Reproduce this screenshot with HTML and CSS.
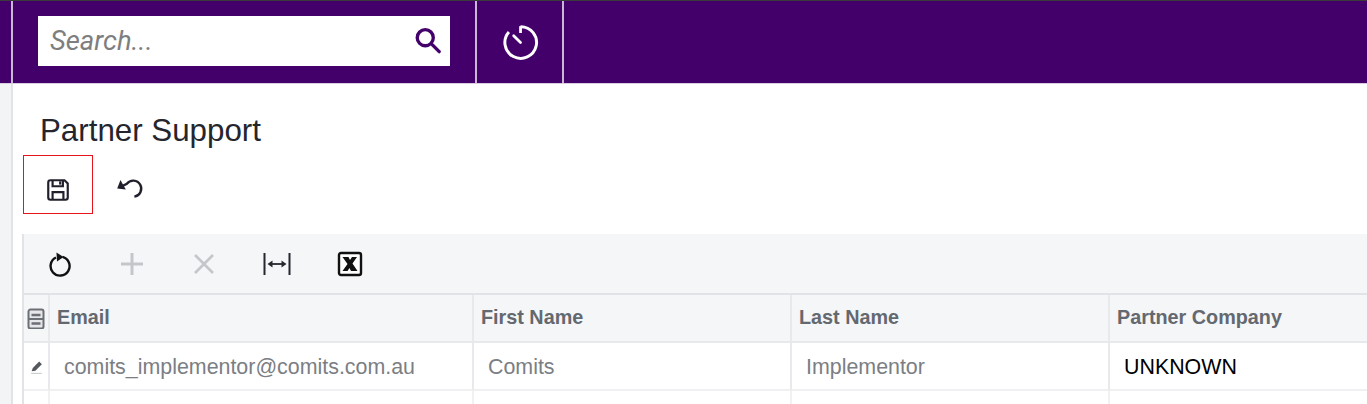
FILE: index.html
```html
<!DOCTYPE html>
<html lang="en">
<head>
<meta charset="utf-8">
<title>Partner Support</title>
<link rel="stylesheet" href="styles.css">
</head>
<body>
<header class="topbar">
  <div class="topbar-start"></div>
  <div class="search-cell">
    <div class="search-box">
      <span class="search-text">Search...</span>
      <svg class="search-icon" viewBox="0 0 26 26" width="29" height="29"><circle cx="11" cy="10.500" r="7.200" fill="none" stroke="#43006b" stroke-width="3"/><path d="M16.500 16l7 7" fill="none" stroke="#43006b" stroke-width="3" stroke-linecap="round"/></svg>
    </div>
  </div>
  <div class="timer-cell">
    <svg viewBox="0 0 36 36" width="38" height="38"><path d="M18.500 3.500A15 15 0 1 1 7.500 8.500" fill="none" stroke="#fff" stroke-width="2.800"/><path d="M18.500 3v6.500" fill="none" stroke="#fff" stroke-width="2.600"/><path d="M12 12l6.500 6.500" fill="none" stroke="#fff" stroke-width="2.600" stroke-linecap="round"/></svg>
  </div>
</header>
<div class="layout">
  <aside class="rail"></aside>
  <main class="content">
    <h1 class="title">Partner Support</h1>
    <div class="actions">
      <button class="action action-save" type="button">
        <svg viewBox="0 0 24 24" width="26" height="26"><path d="M3 5a2 2 0 0 1 2-2h13l3 3v13a2 2 0 0 1-2 2H5a2 2 0 0 1-2-2z" fill="none" stroke="#20202c" stroke-width="2"/><path d="M7 3.500v5h9.500v-5" fill="none" stroke="#20202c" stroke-width="2"/><path d="M7 20.500v-6.500h10v6.500" fill="none" stroke="#20202c" stroke-width="2"/><path d="M13 4h2v3h-2z" fill="#20202c"/></svg>
      </button>
      <button class="action action-undo" type="button">
        <svg viewBox="0 0 28 24" width="30" height="26"><path d="M5 11.500l7-3.500a7.500 7.500 0 1 1 7 12" fill="none" stroke="#20202c" stroke-width="2.200"/><path d="M3 12.500l3-8 5 9z" fill="#20202c"/></svg>
      </button>
    </div>
    <section class="grid">
      <div class="grid-tools">
        <svg class="tool" viewBox="0 0 26 26" width="26" height="26"><path d="M9 6.500a9.500 9.500 0 1 0 6.500-.6" fill="none" stroke="#111" stroke-width="2.400"/><path d="M9.500 1.500l7 4.500-6.500 4.500z" fill="#111"/></svg>
        <svg class="tool" viewBox="0 0 26 26" width="26" height="26"><path d="M13 2v22M2 13h22" fill="none" stroke="#c4c6c9" stroke-width="3"/></svg>
        <svg class="tool" viewBox="0 0 26 26" width="26" height="26"><path d="M4 4l18 18M22 4L4 22" fill="none" stroke="#c4c6c9" stroke-width="2.600"/></svg>
        <svg class="tool" viewBox="0 0 28 26" width="28" height="26"><path d="M1.500 2v22M26.500 2v22" fill="none" stroke="#26262e" stroke-width="2"/><path d="M6 13h16" fill="none" stroke="#26262e" stroke-width="1.800"/><path d="M4.500 13l5-3.500v7zM23.500 13l-5-3.500v7z" fill="#26262e"/></svg>
        <svg class="tool" viewBox="0 0 26 26" width="26" height="26"><rect x="2" y="2" width="22" height="22" rx="2" fill="#fff" stroke="#111" stroke-width="2.400"/><path d="M5.500 6h6l1.500 3 2-3h5l-4.500 6.500 5 7.500h-6.500l-1.500-3-2 3H5.500l5-7z" fill="#111"/></svg>
      </div>
      <div class="grid-table">
        <div class="cell head sel">
          <svg viewBox="0 0 18 22" width="18" height="22"><path d="M1.500 4.500a2 2 0 0 1 2-2h11a2 2 0 0 1 2 2v15a2 2 0 0 1-2 2h-11a2 2 0 0 1-2-2z" fill="#e6e7ea" stroke="#6b6f76" stroke-width="2"/><path d="M1.500 12h15" stroke="#6b6f76" stroke-width="2"/><path d="M4.500 8h9M4.500 16.500h9" stroke="#6b6f76" stroke-width="2.400"/></svg>
        </div>
        <div class="cell head">Email</div>
        <div class="cell head">First Name</div>
        <div class="cell head">Last Name</div>
        <div class="cell head">Partner Company</div>
        <div class="cell body sel">
          <svg viewBox="0 0 14 14" width="15" height="15"><path d="M2.500 10.500l1-3L9.500 1.500l2.500 2.500-6 6z" fill="#55585e"/><path d="M2 12.500h10" stroke="#c9cbce" stroke-width="1"/></svg>
        </div>
        <div class="cell body muted">comits_implementor@comits.com.au</div>
        <div class="cell body muted">Comits</div>
        <div class="cell body muted">Implementor</div>
        <div class="cell body strong">UNKNOWN</div>
        <div class="cell empty sel"></div>
        <div class="cell empty"></div>
        <div class="cell empty"></div>
        <div class="cell empty"></div>
        <div class="cell empty"></div>
      </div>
    </section>
  </main>
</div>
</body>
</html>
```

FILE: styles.css
```css
* { box-sizing: border-box; }

html, body {
  margin: 0;
  height: 404px;
  overflow: hidden;
  background: #fff;
  font-family: "Liberation Sans", Arial, sans-serif;
}

.topbar {
  display: flex;
  height: 84px;
  background: #43006b;
  border-top: 1px solid #3a3a3a;
  border-bottom: 1px solid #d9cde2;
}

.topbar-start {
  width: 13px;
  border-right: 2px solid #c8b8d4;
}

.search-cell {
  width: 464px;
  padding: 15px 0 0 25px;
  border-right: 2px solid #c8b8d4;
}

.search-box {
  display: flex;
  align-items: center;
  justify-content: space-between;
  width: 412px;
  height: 50px;
  padding: 0 8px 0 12px;
  background: #fff;
}

.search-text {
  font-size: 27.400px;
  font-style: italic;
  color: #7e7e7e;
  font-family: Roboto, "Liberation Sans", sans-serif;
}

.search-icon {
  margin-bottom: 2px;
}

.timer-cell {
  display: flex;
  align-items: center;
  justify-content: center;
  width: 87px;
  border-right: 2px solid #c8b8d4;
}

.layout {
  display: flex;
  height: 320px;
}

.rail {
  width: 13px;
  background: #f3f4f6;
  border-right: 2px solid #e1e3e6;
}

.content {
  flex: 1;
  min-width: 0;
  padding-left: 9px;
}

.title {
  margin: 0;
  padding: 29px 0 0 18px;
  height: 71px;
  font-size: 31.300px;
  line-height: 36px;
  font-weight: 400;
  color: #25252d;
}

.actions {
  display: flex;
  align-items: flex-start;
  height: 60px;
  padding-left: 1px;
}

.action {
  display: flex;
  align-items: center;
  justify-content: center;
  padding: 10px 0 0;
  background: none;
  border: 0;
}

.action-save {
  width: 70px;
  height: 59px;
  border: 1px solid #e8141c;
}

.action-undo {
  width: 72px;
  height: 59px;
  padding-top: 6px;
}

.grid {
  margin-top: 19px;
  border-left: 2px solid #e1e3e6;
}

.grid-tools {
  display: flex;
  align-items: center;
  gap: 46px;
  height: 61px;
  padding-left: 23px;
  background: #f5f6f8;
  border-bottom: 2px solid #e1e3e6;
}

.grid-table {
  display: grid;
  grid-template-columns: 26px 424px 318px 318px 1fr;
  grid-template-rows: 48px 48px 20px;
}

.cell {
  display: flex;
  align-items: center;
  border-right: 2px solid #e8e9ec;
  border-bottom: 2px solid #e8e9ec;
  padding-left: 7px;
}

.cell:nth-child(5n) { border-right: 0; }

.head {
  background: #f5f6f8;
  color: #64686f;
  font-size: 19.800px;
  font-weight: 700;
  padding-bottom: 2px;
}

.sel {
  justify-content: center;
  padding: 0;
}

.body {
  background: #fff;
  font-size: 21.400px;
  border-bottom-color: #f0f0f3;
  padding-top: 2px;
}

.muted {
  color: #7b7e83;
  padding-left: 14px;
}

.strong {
  color: #000;
  padding-left: 14px;
}

.empty {
  background: #fff;
  border-bottom: 0;
  border-right-color: #f1f1f4;
}
```
